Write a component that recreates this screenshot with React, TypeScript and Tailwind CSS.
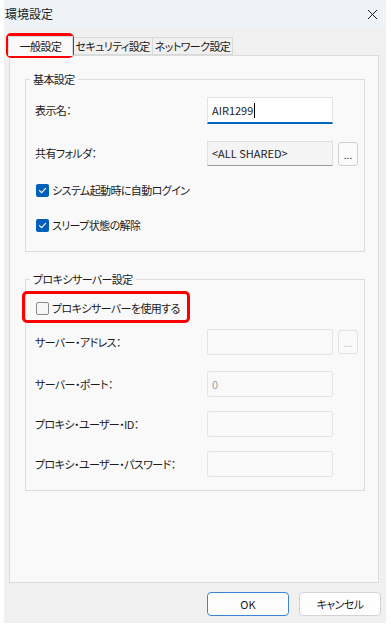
import React from "react";

const font = "font-['Noto_Sans_CJK_JP','Noto_Sans',sans-serif] [font-feature-settings:'palt']";

function CheckBox({ checked }: { checked: boolean }) {
  return checked ? (
    <span className="flex h-[13px] w-[13px] shrink-0 items-center justify-center rounded-[2px] bg-[#005fb8]">
      <svg width="9" height="9" viewBox="0 0 9 9" fill="none">
        <path d="M1.5 4.6 L3.6 6.6 L7.6 2.4" stroke="white" strokeWidth="1.2" strokeLinecap="round" strokeLinejoin="round" />
      </svg>
    </span>
  ) : (
    <span className="h-[13px] w-[13px] shrink-0 rounded-[2px] border border-[#8a8a8a] bg-[#f7f7f7]" />
  );
}

function Row({ label, children, className }: { label: string; children: React.ReactNode; className?: string }) {
  return (
    <div className={`flex items-center ${className ?? ""}`}>
      <div className="w-[181px] shrink-0 whitespace-nowrap pl-[9px] text-[11px] tracking-[-0.6px] text-[#1b1b1b]">{label}</div>
      {children}
    </div>
  );
}

function DisabledInput({ value }: { value?: string }) {
  return (
    <div className="flex h-[26px] w-[126px] items-center rounded-[2px] border border-[#e5e5e5] bg-[#f9f9f9] px-[4px] text-[11px] text-[#a0a0a0]">
      {value}
    </div>
  );
}

export default function App() {
  return (
    <div className={`min-h-[629px] bg-white ${font}`}>
      <div className="relative ml-[4px] flex h-[623px] w-[382px] flex-col bg-[#f0f0f0]">
        {/* Title bar */}
        <div className="flex h-[28px] items-center justify-between rounded-tr-[6px] bg-[#eff3f7] pl-[1px] pr-[8px]">
          <span className="text-[12px] text-[#1b1b1b]">環境設定</span>
          <svg width="11" height="11" viewBox="0 0 11 11">
            <path d="M1 1 L10 10 M10 1 L1 10" stroke="#1b1b1b" strokeWidth="1" />
          </svg>
        </div>

        {/* Tabs */}
        <div className="mt-[9px] flex h-[18px] items-end whitespace-nowrap pl-[4px] text-[11px] tracking-[-0.6px] text-[#1b1b1b]">
          <div className="relative z-10 -mb-[1px] flex h-[20px] w-[65px] items-center justify-center border border-b-0 border-[#d9d9d9] bg-[#f9f9f9]">
            一般設定
          </div>
          <div className="flex h-[18px] w-[80px] items-center justify-center border border-l-0 border-[#d9d9d9] bg-[#f0f0f0]">
            セキュリティ設定
          </div>
          <div className="flex h-[18px] w-[80px] items-center justify-center border border-l-0 border-[#d9d9d9] bg-[#f0f0f0]">
            ネットワーク設定
          </div>
        </div>

        {/* Panel */}
        <div className="ml-[5px] h-[528px] w-[370px] border border-[#dcdcdc] bg-[#f9f9f9] text-[11px] tracking-[-0.6px]">
          <fieldset className="ml-[15px] mt-[15px] w-[340px] border border-[#dcdcdc] pb-[18px]">
            <legend className="ml-[4px] px-[3px] leading-[16px] text-[#1b1b1b]">基本設定</legend>
            <Row label="表示名：" className="mt-[10px] h-[27px]">
              <div className="flex h-[27px] w-[126px] items-center border border-b-2 border-[#e3e3e3] border-b-[#0067c0] bg-white px-[4px] tracking-normal text-[#1b1b1b]">
                AIR1299<span className="ml-[1px] h-[15px] w-px bg-black" />
              </div>
            </Row>
            <Row label="共有フォルダ：" className="mt-[17px] h-[25px]">
              <div className="flex h-[25px] w-[126px] items-center border border-[#e0e0e0] border-b-[#9a9a9a] bg-[#f4f4f4] px-[4px] tracking-normal text-[#1b1b1b]">
                &lt;ALL SHARED&gt;
              </div>
              <div className="ml-[5px] flex h-[24px] w-[20px] items-end justify-center rounded-[3px] border border-[#d0d0d0] bg-[#fbfbfb] pb-[5px] text-[10px] leading-[10px] tracking-normal text-[#1b1b1b]">
                ...
              </div>
            </Row>
            <div className="mt-[16px] flex h-[16px] items-center gap-[3px] pl-[10px] text-[#1b1b1b]">
              <CheckBox checked />
              <span>システム起動時に自動ログイン</span>
            </div>
            <div className="mt-[19px] flex h-[16px] items-center gap-[3px] pl-[10px] text-[#1b1b1b]">
              <CheckBox checked />
              <span>スリープ状態の解除</span>
            </div>
          </fieldset>

          <fieldset className="ml-[15px] mt-[19px] w-[340px] border border-[#dcdcdc] pb-[13px]">
            <legend className="ml-[4px] px-[3px] leading-[16px] text-[#1b1b1b]">プロキシサーバー設定</legend>
            <div className="relative mt-[13px] flex h-[16px] items-center gap-[3px] pl-[10px] text-[#1b1b1b]">
              <CheckBox checked={false} />
              <span>プロキシサーバーを使用する</span>
              <div className="pointer-events-none absolute -left-[4px] -top-[9px] h-[32px] w-[168px] rounded-[5px] border-[3px] border-[#ff0000]" />
            </div>
            <Row label="サーバー・アドレス：" className="mt-[13px] h-[26px]">
              <DisabledInput />
              <div className="ml-[5px] flex h-[24px] w-[20px] items-end justify-center rounded-[3px] border border-[#e3e3e3] bg-[#f9f9f9] pb-[5px] text-[10px] leading-[10px] tracking-normal text-[#b0b0b0]">
                ...
              </div>
            </Row>
            <Row label="サーバー・ポート：" className="mt-[16px] h-[26px]">
              <DisabledInput value="0" />
            </Row>
            <Row label="プロキシ・ユーザー・ID：" className="mt-[14px] h-[26px]">
              <DisabledInput />
            </Row>
            <Row label="プロキシ・ユーザー・パスワード：" className="mt-[14px] h-[26px]">
              <DisabledInput />
            </Row>
          </fieldset>
        </div>

        {/* Buttons */}
        <div className="mt-[9px] flex justify-end gap-[10px] pr-[5px] text-[11px] text-[#1b1b1b]">
          <button type="button" className="flex h-[24px] w-[82px] items-center justify-center rounded-[4px] border border-[#3a86d4] bg-[#fdfdfd]">
            OK
          </button>
          <button type="button" className="flex h-[24px] w-[82px] items-center justify-center rounded-[4px] border border-[#d3d3d3] bg-[#fdfdfd] tracking-[-0.6px]">
            キャンセル
          </button>
        </div>

        {/* Red highlight around the first tab */}
        <div className="pointer-events-none absolute left-[2px] top-[33px] h-[25px] w-[68px] rounded-[5px] border-[3px] border-[#ff0000]" />
      </div>
    </div>
  );
}
